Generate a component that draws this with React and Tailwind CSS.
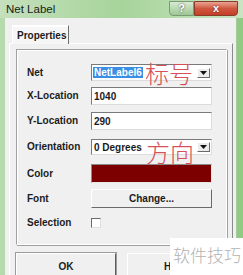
import React from "react";

const sans = { fontFamily: '"Liberation Sans", Arial, sans-serif' };

function Arrow() {
  return (
    <div className="w-[13px] h-[10px] mr-[1px] bg-[#ececec] border border-t-[#ffffff] border-l-[#ffffff] border-r-[#6b6b6b] border-b-[#6b6b6b] flex items-center justify-center">
      <svg width="7" height="4" viewBox="0 0 7 4">
        <polygon points="0,0 7,0 3.5,4" fill="#111" />
      </svg>
    </div>
  );
}

function Label({ children }) {
  return (
    <div className="w-[64px] font-['Liberation_Sans',Arial,sans-serif] font-bold text-[10px] leading-none text-[#1c1c1c]">
      {children}
    </div>
  );
}

export default function App() {
  return (
    <div
      className="relative w-[243px] h-[275px] overflow-hidden flex flex-col bg-linear-to-r from-[#b7d9ae] via-[#9fd192] to-[#8fcb82]"
      style={sans}
    >
      {/* title bar */}
      <div className="h-[22px] flex justify-between pr-[5px] bg-linear-to-r from-[#c4e0bc] via-[#a6d49a] to-[#c9e4c2]">
        <div className="self-center pl-[6px] pt-[1px] text-[11.5px] text-[#18221a] font-['Liberation_Sans',Arial,sans-serif]">
          Net Label
        </div>
        <div className="flex self-start pt-[1px]">
          <div className="w-[25px] h-[15px] rounded-bl-[4px] border border-[#7a9a75] bg-linear-to-b from-[#d8ebd3] to-[#9dc794] flex items-center justify-center text-[11px] font-bold text-white [text-shadow:0_0_2px_#333]">
            ?
          </div>
          <div className="w-[44px] h-[15px] rounded-br-[4px] border border-[#8b3a2c] bg-linear-to-b from-[#e9a393] via-[#d0573f] to-[#c33f28] flex items-center justify-center text-[11px] font-bold text-white [text-shadow:0_0_2px_#5a1a10]">
            x
          </div>
        </div>
      </div>

      {/* body */}
      <div className="flex flex-1">
        <div className="w-[5px]" />
        <div className="flex-1 bg-[#f0f0f0] pt-[7px] flex flex-col">
          {/* tab row */}
          <div className="pl-[7px] flex">
            <div className="relative z-10 w-[57px] h-[19px] -mb-[1px] bg-[#f6f6f6] border border-b-0 border-t-[#ffffff] border-l-[#ffffff] border-r-[#6e6e6e] shadow-[inset_0_1px_0_#ffffff] flex items-center pl-[4px] font-bold text-[10px] text-[#1c1c1c]">
              Properties
            </div>
          </div>
          {/* tab panel */}
          <div className="flex-1 ml-[4px] mr-[3px] border border-b-0 border-t-[#ffffff] border-l-[#ffffff] border-r-[#8a8a8a] flex flex-col">
            {/* group box */}
            <div className="mt-[5px] ml-[6px] mr-[5px] h-[196px] border border-t-[#a0a0a0] border-l-[#a0a0a0] border-r-[#ffffff] border-b-[#ffffff] shadow-[1px_1px_0_#a0a0a0,inset_1px_1px_0_#ffffff] pl-[10px] flex flex-col">
              {/* Net */}
              <div className="mt-[14px] h-[17px] flex items-center">
                <Label>Net</Label>
                <div className="w-[121px] h-[17px] bg-white border border-t-[#7a7a7a] border-l-[#7a7a7a] border-r-[#dcdcdc] border-b-[#dcdcdc] flex items-center justify-between pl-[1px]">
                  <span className="bg-[#3a8ee6] text-white font-bold text-[10px] leading-[11px] px-[1px]">NetLabel6</span>
                  <Arrow />
                </div>
              </div>
              {/* X */}
              <div className="mt-[6px] h-[18px] flex items-center">
                <Label>X-Location</Label>
                <div className="w-[121px] h-[18px] bg-white border border-t-[#7a7a7a] border-l-[#7a7a7a] border-r-[#dcdcdc] border-b-[#dcdcdc] flex items-center pl-[2px] font-bold text-[10px] text-[#1c1c1c]">
                  1040
                </div>
              </div>
              {/* Y */}
              <div className="mt-[7px] h-[18px] flex items-center">
                <Label>Y-Location</Label>
                <div className="w-[121px] h-[18px] bg-white border border-t-[#7a7a7a] border-l-[#7a7a7a] border-r-[#dcdcdc] border-b-[#dcdcdc] flex items-center pl-[2px] font-bold text-[10px] text-[#1c1c1c]">
                  290
                </div>
              </div>
              {/* Orientation */}
              <div className="mt-[9px] h-[16px] flex items-center">
                <Label>Orientation</Label>
                <div className="w-[121px] h-[16px] bg-white border border-t-[#7a7a7a] border-l-[#7a7a7a] border-r-[#dcdcdc] border-b-[#dcdcdc] flex items-center justify-between pl-[2px] font-bold text-[10px] text-[#1c1c1c]">
                  <span>0 Degrees</span>
                  <Arrow />
                </div>
              </div>
              {/* Color */}
              <div className="mt-[9px] h-[19px] flex items-center">
                <Label>Color</Label>
                <div className="w-[121px] h-[19px] bg-[#7c0000] border border-t-[#8a8a8a] border-l-[#8a8a8a] border-r-[#e6e6e6] border-b-[#e6e6e6]" />
              </div>
              {/* Font */}
              <div className="mt-[6px] h-[19px] flex items-center">
                <Label>Font</Label>
                <div className="w-[121px] h-[19px] bg-[#f0f0f0] border border-t-[#ffffff] border-l-[#ffffff] border-r-[#6a6a6a] border-b-[#6a6a6a] flex items-center justify-center font-bold text-[10px] text-[#1c1c1c]">
                  Change...
                </div>
              </div>
              {/* Selection */}
              <div className="mt-[8px] h-[14px] flex items-center">
                <Label>Selection</Label>
                <div className="w-[10px] h-[10px] bg-white border border-t-[#6a6a6a] border-l-[#6a6a6a] border-r-[#e0e0e0] border-b-[#e0e0e0]" />
              </div>
            </div>
            {/* buttons */}
            <div className="mt-[8px] ml-[6px] flex gap-[11px]">
              <div className="w-[100px] h-[24px] bg-[#f0f0f0] border border-t-[#ffffff] border-l-[#ffffff] border-r-[#5e5e5e] border-b-[#5e5e5e] shadow-[0_0_0_1px_#9a9a9a] flex items-start pt-[5px] justify-center font-bold text-[10px] text-[#1c1c1c]">
                OK
              </div>
              <div className="w-[100px] h-[24px] bg-[#f0f0f0] border border-t-[#ffffff] border-l-[#ffffff] border-r-[#5e5e5e] border-b-[#5e5e5e] flex items-start pt-[5px] pl-[36px] font-bold text-[10px] text-[#1c1c1c]">
                H
              </div>
            </div>
          </div>
        </div>
        <div className="w-[7px] border-l border-[#a8c8a2]" />
      </div>

      {/* red annotations */}
      <div className="absolute left-[145px] top-[61px] text-[24px] leading-none text-[#d6505a] font-['Noto_Sans_CJK_SC',sans-serif] font-light">
        标号
      </div>
      <div className="absolute left-[146px] top-[140px] text-[24px] leading-none text-[#d6505a] font-['Noto_Sans_CJK_SC',sans-serif] font-light">
        方向
      </div>

      {/* watermark */}
      <div className="absolute left-[170px] top-[238px] w-[73px] h-[37px] bg-white pl-[3px] pt-[8px] text-[17px] leading-none text-[#b3b3b3] font-['Noto_Sans_CJK_SC',sans-serif] font-light whitespace-nowrap">
        软件技巧
      </div>
    </div>
  );
}
